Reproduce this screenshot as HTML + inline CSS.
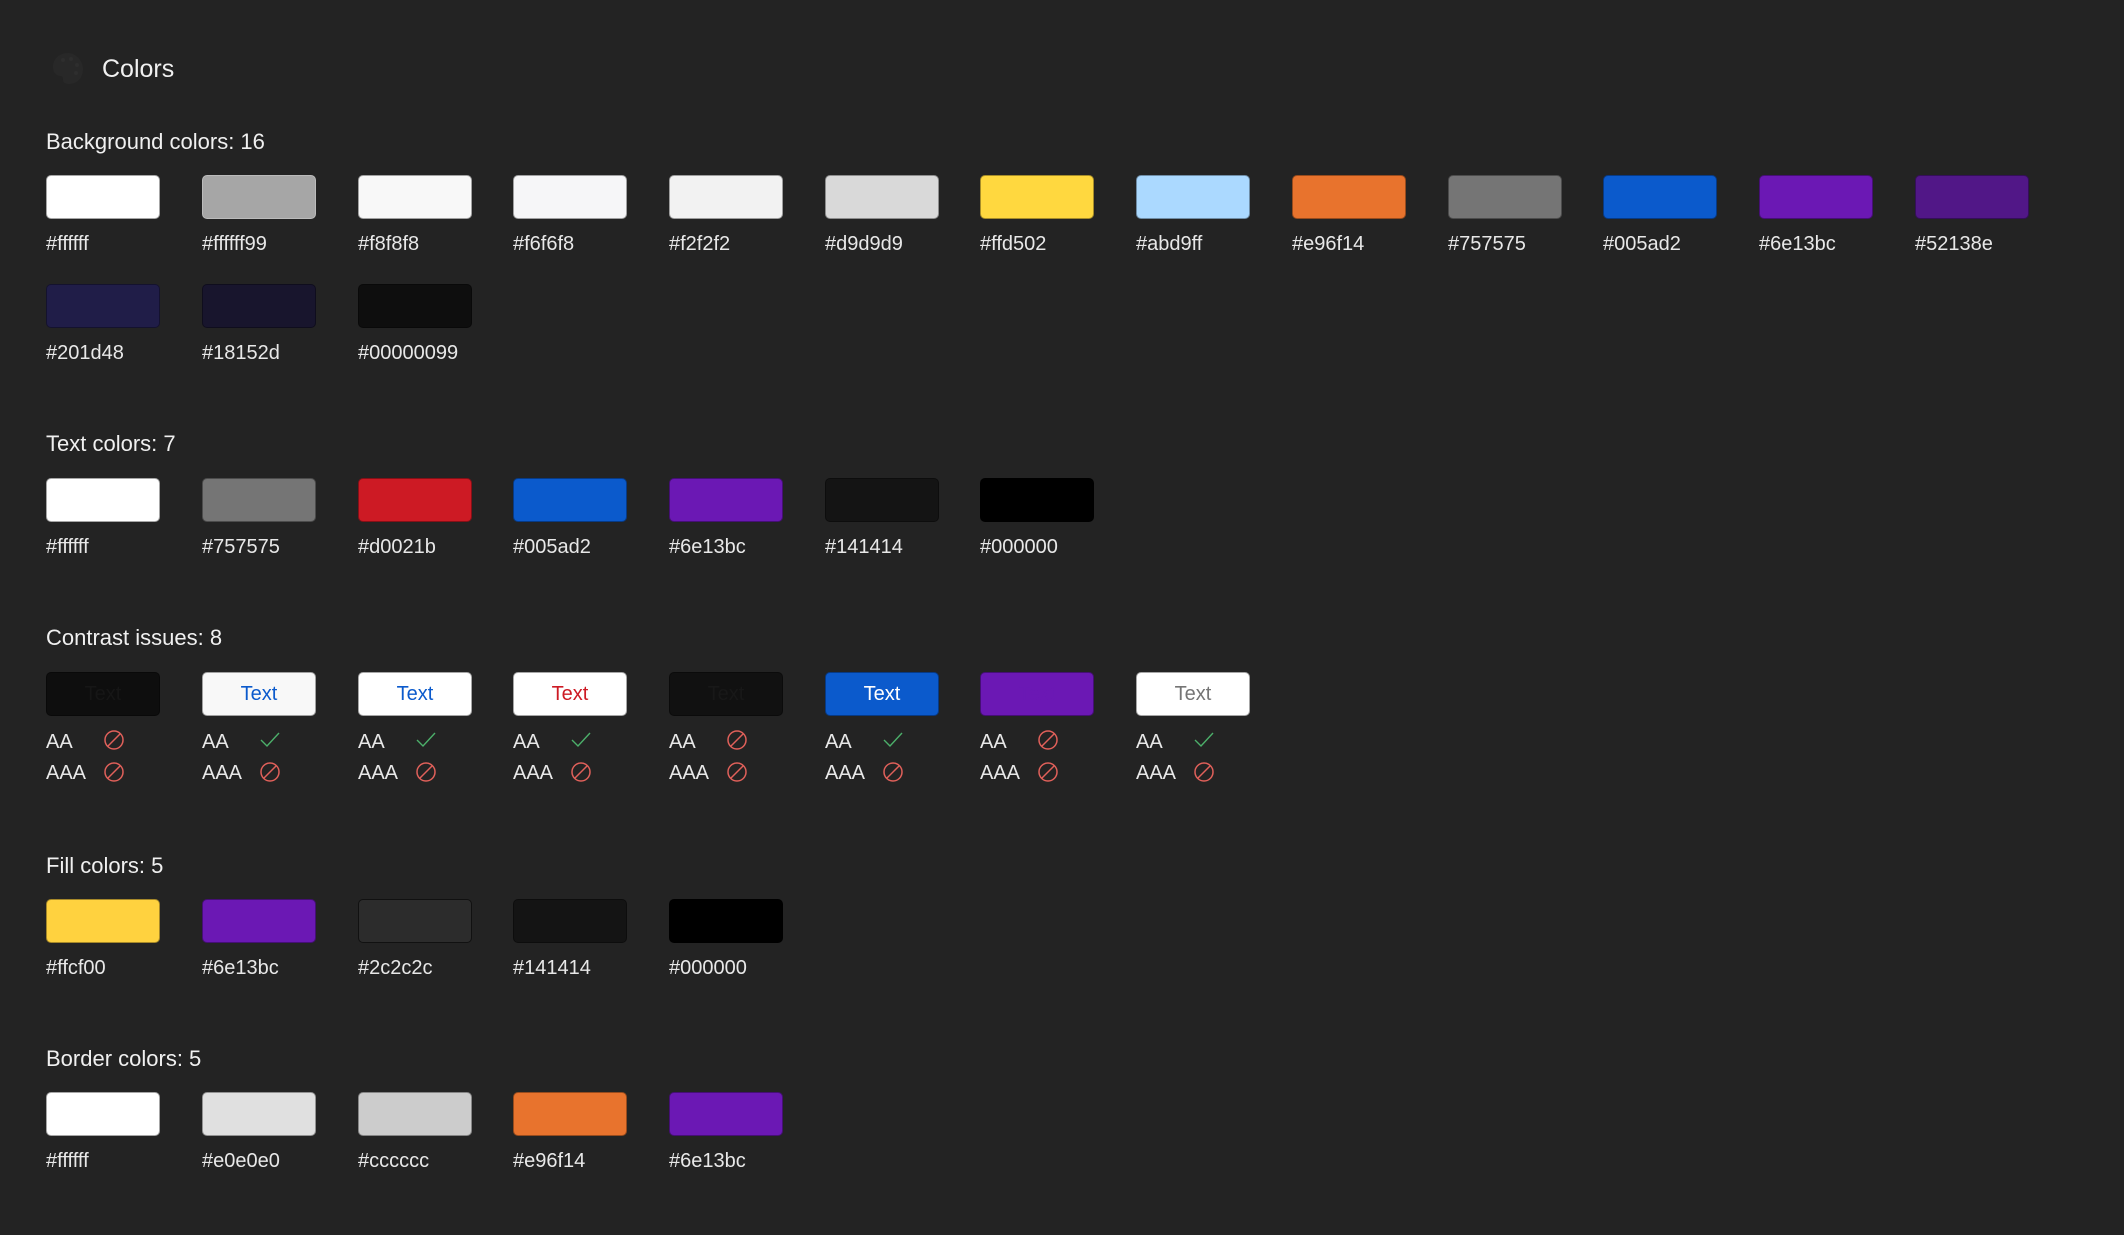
<!DOCTYPE html>
<html><head><meta charset="utf-8">
<style>
*{margin:0;padding:0;box-sizing:border-box}
body{width:2124px;height:1235px;background:#232323;position:relative;overflow:hidden;font-family:"Liberation Sans",sans-serif;color:#f0f0f0}
.h{position:absolute;left:46px;font-size:22px;line-height:22px;white-space:nowrap}
.s{position:absolute;width:114px;height:44px;border-radius:5px;border:1px solid rgba(0,0,0,.35);font-size:20px;line-height:42px;text-align:center}
.l{position:absolute;font-size:20px;line-height:20px;color:#e8e8e8;white-space:nowrap}
</style></head><body>
<svg style="position:absolute;left:51px;top:51px" width="34" height="34" viewBox="0 0 34 34"><path d="M17 2C8 2 2 8 2 16c0 6 4 9 7 9 3 0 3 2 3 4 0 3 3 4 6 4 9 0 14-7 14-15S25 2 17 2z" fill="#282828"/><circle cx="12" cy="9" r="2" fill="#2e2e2e"/><circle cx="20" cy="8" r="2" fill="#2e2e2e"/><circle cx="26" cy="14" r="2" fill="#2e2e2e"/><circle cx="25" cy="22" r="2" fill="#2e2e2e"/></svg>
<div style="position:absolute;left:102px;top:57px;font-size:25px;line-height:25px">Colors</div>

<div class="h" style="top:131px">Background colors: 16</div>
<div class="s" style="left:46px;top:175px;background:#ffffff"></div><div class="l" style="left:46px;top:234px">#ffffff</div>
<div class="s" style="left:202px;top:175px;background:#a6a6a6;border-color:#bbb"></div><div class="l" style="left:202px;top:234px">#ffffff99</div>
<div class="s" style="left:358px;top:175px;background:#f8f8f8"></div><div class="l" style="left:358px;top:234px">#f8f8f8</div>
<div class="s" style="left:513px;top:175px;background:#f6f6f8"></div><div class="l" style="left:513px;top:234px">#f6f6f8</div>
<div class="s" style="left:669px;top:175px;background:#f2f2f2"></div><div class="l" style="left:669px;top:234px">#f2f2f2</div>
<div class="s" style="left:825px;top:175px;background:#d9d9d9"></div><div class="l" style="left:825px;top:234px">#d9d9d9</div>
<div class="s" style="left:980px;top:175px;background:#ffd83f"></div><div class="l" style="left:980px;top:234px">#ffd502</div>
<div class="s" style="left:1136px;top:175px;background:#abd9ff"></div><div class="l" style="left:1136px;top:234px">#abd9ff</div>
<div class="s" style="left:1292px;top:175px;background:#e8732d"></div><div class="l" style="left:1292px;top:234px">#e96f14</div>
<div class="s" style="left:1448px;top:175px;background:#757575"></div><div class="l" style="left:1448px;top:234px">#757575</div>
<div class="s" style="left:1603px;top:175px;background:#0b5acc"></div><div class="l" style="left:1603px;top:234px">#005ad2</div>
<div class="s" style="left:1759px;top:175px;background:#6b18b4"></div><div class="l" style="left:1759px;top:234px">#6e13bc</div>
<div class="s" style="left:1915px;top:175px;background:#511787"></div><div class="l" style="left:1915px;top:234px">#52138e</div>
<div class="s" style="left:46px;top:284px;background:#201d48"></div><div class="l" style="left:46px;top:343px">#201d48</div>
<div class="s" style="left:202px;top:284px;background:#18152d"></div><div class="l" style="left:202px;top:343px">#18152d</div>
<div class="s" style="left:358px;top:284px;background:#0e0e0e"></div><div class="l" style="left:358px;top:343px">#00000099</div>

<div class="h" style="top:433px">Text colors: 7</div>
<div class="s" style="left:46px;top:478px;background:#ffffff"></div><div class="l" style="left:46px;top:537px">#ffffff</div>
<div class="s" style="left:202px;top:478px;background:#757575"></div><div class="l" style="left:202px;top:537px">#757575</div>
<div class="s" style="left:358px;top:478px;background:#cd1a24"></div><div class="l" style="left:358px;top:537px">#d0021b</div>
<div class="s" style="left:513px;top:478px;background:#0b5acc"></div><div class="l" style="left:513px;top:537px">#005ad2</div>
<div class="s" style="left:669px;top:478px;background:#6b18b4"></div><div class="l" style="left:669px;top:537px">#6e13bc</div>
<div class="s" style="left:825px;top:478px;background:#141414"></div><div class="l" style="left:825px;top:537px">#141414</div>
<div class="s" style="left:980px;top:478px;background:#000000"></div><div class="l" style="left:980px;top:537px">#000000</div>

<div class="h" style="top:627px">Contrast issues: 8</div>
<div class="s" style="left:46px;top:672px;background:#0e0e0e;color:#161616">Text</div>
<div class="s" style="left:202px;top:672px;background:#f8f8f8;color:#0b5acc">Text</div>
<div class="s" style="left:358px;top:672px;background:#ffffff;color:#0b5acc">Text</div>
<div class="s" style="left:513px;top:672px;background:#ffffff;color:#cd1a24">Text</div>
<div class="s" style="left:669px;top:672px;background:#111111;color:#181818">Text</div>
<div class="s" style="left:825px;top:672px;background:#0b5acc;color:#ffffff">Text</div>
<div class="s" style="left:980px;top:672px;background:#6b18b4;color:#6b18b4">Text</div>
<div class="s" style="left:1136px;top:672px;background:#ffffff;color:#757575">Text</div>

<div class="l" style="left:46px;top:732px">AA</div><div class="l" style="left:46px;top:763px">AAA</div>
<div class="l" style="left:202px;top:732px">AA</div><div class="l" style="left:202px;top:763px">AAA</div>
<div class="l" style="left:358px;top:732px">AA</div><div class="l" style="left:358px;top:763px">AAA</div>
<div class="l" style="left:513px;top:732px">AA</div><div class="l" style="left:513px;top:763px">AAA</div>
<div class="l" style="left:669px;top:732px">AA</div><div class="l" style="left:669px;top:763px">AAA</div>
<div class="l" style="left:825px;top:732px">AA</div><div class="l" style="left:825px;top:763px">AAA</div>
<div class="l" style="left:980px;top:732px">AA</div><div class="l" style="left:980px;top:763px">AAA</div>
<div class="l" style="left:1136px;top:732px">AA</div><div class="l" style="left:1136px;top:763px">AAA</div>

<svg style="position:absolute;left:0;top:0" width="2124" height="1235">
<defs>
<g id="x"><circle cx="0" cy="0" r="9" fill="none" stroke="#e0605a" stroke-width="1.5"/><line x1="-6" y1="6" x2="6" y2="-6" stroke="#e0605a" stroke-width="1.5"/></g>
<g id="c"><path d="M-9 0 L-3 6 L9 -7" fill="none" stroke="#4caf6a" stroke-width="1.4"/></g>
</defs>
<use href="#x" x="114" y="740"/><use href="#x" x="114" y="772"/>
<use href="#c" x="270" y="740"/><use href="#x" x="270" y="772"/>
<use href="#c" x="426" y="740"/><use href="#x" x="426" y="772"/>
<use href="#c" x="581" y="740"/><use href="#x" x="581" y="772"/>
<use href="#x" x="737" y="740"/><use href="#x" x="737" y="772"/>
<use href="#c" x="893" y="740"/><use href="#x" x="893" y="772"/>
<use href="#x" x="1048" y="740"/><use href="#x" x="1048" y="772"/>
<use href="#c" x="1204" y="740"/><use href="#x" x="1204" y="772"/>
</svg>

<div class="h" style="top:855px">Fill colors: 5</div>
<div class="s" style="left:46px;top:899px;background:#ffd23f"></div><div class="l" style="left:46px;top:958px">#ffcf00</div>
<div class="s" style="left:202px;top:899px;background:#6b18b4"></div><div class="l" style="left:202px;top:958px">#6e13bc</div>
<div class="s" style="left:358px;top:899px;background:#2c2c2c;border-color:#111"></div><div class="l" style="left:358px;top:958px">#2c2c2c</div>
<div class="s" style="left:513px;top:899px;background:#141414"></div><div class="l" style="left:513px;top:958px">#141414</div>
<div class="s" style="left:669px;top:899px;background:#000000"></div><div class="l" style="left:669px;top:958px">#000000</div>

<div class="h" style="top:1048px">Border colors: 5</div>
<div class="s" style="left:46px;top:1092px;background:#ffffff"></div><div class="l" style="left:46px;top:1151px">#ffffff</div>
<div class="s" style="left:202px;top:1092px;background:#e0e0e0"></div><div class="l" style="left:202px;top:1151px">#e0e0e0</div>
<div class="s" style="left:358px;top:1092px;background:#cccccc"></div><div class="l" style="left:358px;top:1151px">#cccccc</div>
<div class="s" style="left:513px;top:1092px;background:#e8732d"></div><div class="l" style="left:513px;top:1151px">#e96f14</div>
<div class="s" style="left:669px;top:1092px;background:#6b18b4"></div><div class="l" style="left:669px;top:1151px">#6e13bc</div>
</body></html>
